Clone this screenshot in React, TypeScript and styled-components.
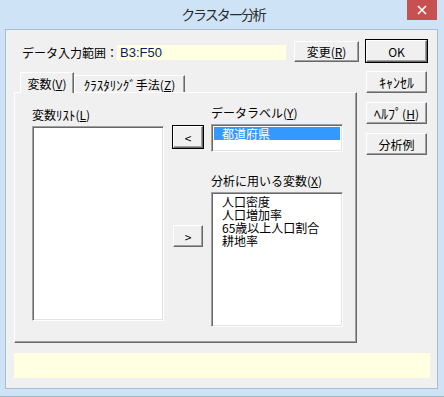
import styled, { createGlobalStyle } from 'styled-components';

const GlobalStyle = createGlobalStyle`
  html, body {
    margin: 0;
    padding: 0;
    width: 444px;
    height: 397px;
    overflow: hidden;
    background: #cfe3f6;
  }
  body {
    font-family: "Noto Sans CJK JP", "Liberation Sans", sans-serif;
    font-size: 12px;
    color: #000;
  }
`;

const labelItems = ['都道府県'];
const usedItems = ['人口密度', '人口増加率', '65歳以上人口割合', '耕地率'];

export default function App() {
  return (
    <>
      <GlobalStyle />
      <WindowStyled>
        <TitleBarStyled>
          <TitleText>クラスター分析</TitleText>
          <CloseButton>
            <svg width="10" height="10" viewBox="0 0 10 10">
              <path d="M1 1 L9 9 M9 1 L1 9" stroke="#fff" strokeWidth="1.6" />
            </svg>
          </CloseButton>
        </TitleBarStyled>
        <ClientStyled>
          <BodyRow>
            <MainColumn>
              <TopRow>
                <FieldLabel>データ入力範囲：</FieldLabel>
                <RangeField>B3:F50</RangeField>
                <PushButton $w={65} $h={21} $mt={2}>
                  変更(<u>R</u>)
                </PushButton>
              </TopRow>
              <TabStrip>
                <Tab $active $w={54}>
                  変数(<u>V</u>)
                </Tab>
                <Tab $w={111}>
                  <Kana $size={13}>ｸﾗｽﾀﾘﾝｸﾞ</Kana>手法(<u>Z</u>)
                </Tab>
              </TabStrip>
              <TabPanel>
                <ListColumn>
                  <ListLabel $mt={2}>
                    変数<Kana $size={13}>ﾘｽﾄ</Kana>(<u>L</u>)
                  </ListLabel>
                  <ListBox $h={195} />
                </ListColumn>
                <ArrowColumn>
                  <PushButton $w={30} $h={22} $mt={21} $focused>
                    &lt;
                  </PushButton>
                  <PushButton $w={30} $h={22} $mt={77}>
                    &gt;
                  </PushButton>
                </ArrowColumn>
                <ListColumn>
                  <ListLabel>
                    データラベル(<u>Y</u>)
                  </ListLabel>
                  <ListBox $h={28}>
                    {labelItems.map((t) => (
                      <ListItem key={t} $selected>
                        {t}
                      </ListItem>
                    ))}
                  </ListBox>
                  <ListLabel $mt={21}>
                    分析に用いる変数(<u>X</u>)
                  </ListLabel>
                  <ListBox $h={135}>
                    {usedItems.map((t) => (
                      <ListItem key={t}>{t}</ListItem>
                    ))}
                  </ListBox>
                </ListColumn>
              </TabPanel>
            </MainColumn>
            <SideColumn>
              <PushButton $w={61} $h={22} $mt={1} $focused>
                OK
              </PushButton>
              <PushButton $w={61} $h={22}>
                <Kana $size={14}>ｷｬﾝｾﾙ</Kana>
              </PushButton>
              <PushButton $w={61} $h={22}>
                <Kana $size={14}>ﾍﾙﾌﾟ</Kana>(<u>H</u>)
              </PushButton>
              <PushButton $w={61} $h={22}>
                分析例
              </PushButton>
            </SideColumn>
          </BodyRow>
          <StatusBar />
        </ClientStyled>
      </WindowStyled>
    </>
  );
}

const WindowStyled = styled.div`
  width: 444px;
  height: 397px;
  display: flex;
  flex-direction: column;
  background: #cfe3f6;
  box-sizing: border-box;
  border-bottom: 1px solid #a4b6c8;
`;

const TitleBarStyled = styled.div`
  height: 29px;
  flex-shrink: 0;
  display: flex;
  align-items: center;
  justify-content: center;
  position: relative;
`;

const TitleText = styled.div`
  font-size: 14px;
  letter-spacing: -2px;
  color: #2b2b2b;
  margin-top: -1px;
  margin-left: 2px;
`;

const CloseButton = styled.div`
  position: absolute;
  top: 0;
  right: 7px;
  width: 30px;
  height: 20px;
  background: #c75050;
  display: flex;
  align-items: center;
  justify-content: center;
`;

const ClientStyled = styled.div`
  margin: 0 6px 7px 5px;
  flex: 1;
  background: #f0f0f0;
  border: 1px solid #a9bdd2;
  padding: 9px 0 0 8px;
  display: flex;
  flex-direction: column;
`;

const BodyRow = styled.div`
  display: flex;
`;

const MainColumn = styled.div`
  width: 345px;
  display: flex;
  flex-direction: column;
`;

const SideColumn = styled.div`
  margin-left: 7px;
  display: flex;
  flex-direction: column;
  gap: 9px;
`;

const TopRow = styled.div`
  height: 33px;
  display: flex;
  align-items: flex-start;
`;

const FieldLabel = styled.div`
  width: 95px;
  padding-left: 8px;
  line-height: 15px;
  margin-top: 6px;
  font-size: 12px;
  white-space: nowrap;
`;

const RangeField = styled.div`
  width: 166px;
  height: 15px;
  margin-top: 6px;
  padding-left: 3px;
  background: #ffffe1;
  color: #0c1a66;
  font-family: "Liberation Sans", sans-serif;
  font-size: 13px;
  line-height: 15px;
  margin-right: 8px;
`;

const Kana = styled.span<{ $size: number }>`
  font-size: ${(p) => p.$size}px;
`;

const PushButton = styled.div<{ $w: number; $h: number; $mt?: number; $focused?: boolean }>`
  box-sizing: border-box;
  width: ${(p) => p.$w}px;
  height: ${(p) => p.$h}px;
  margin-top: ${(p) => p.$mt ?? 0}px;
  background: #f0f0f0;
  border-top: 1px solid #fff;
  border-left: 1px solid #fff;
  border-right: 1px solid #696969;
  border-bottom: 1px solid #696969;
  box-shadow: inset -1px -1px 0 #a0a0a0;
  outline: ${(p) => (p.$focused ? '1px solid #000' : 'none')};
  display: flex;
  align-items: center;
  justify-content: center;
  font-size: 12px;
  color: #000;
  white-space: nowrap;
`;

const TabStrip = styled.div`
  display: flex;
  align-items: flex-end;
  height: 20px;
  margin-left: 6px;
`;

const Tab = styled.div<{ $active?: boolean; $w: number }>`
  box-sizing: border-box;
  width: ${(p) => p.$w}px;
  height: ${(p) => (p.$active ? 21 : 17)}px;
  margin-bottom: ${(p) => (p.$active ? -1 : 0)}px;
  background: #f0f0f0;
  border-top: 1px solid #fff;
  border-left: 1px solid #fff;
  border-right: 1px solid #696969;
  box-shadow: inset -1px 0 0 #a0a0a0;
  display: flex;
  align-items: center;
  justify-content: center;
  font-size: 12px;
  white-space: nowrap;
  position: relative;
  z-index: ${(p) => (p.$active ? 1 : 0)};
`;

const TabPanel = styled.div`
  box-sizing: border-box;
  width: 343px;
  height: 251px;
  background: #f0f0f0;
  border-top: 1px solid #fff;
  border-left: 1px solid #fff;
  border-right: 1px solid #696969;
  border-bottom: 1px solid #696969;
  box-shadow: inset -1px -1px 0 #a0a0a0;
  padding: 12px 0 0 17px;
  display: flex;
  gap: 8px;
`;

const ListColumn = styled.div`
  width: 132px;
  display: flex;
  flex-direction: column;
`;

const ArrowColumn = styled.div`
  width: 30px;
  margin-left: 1px;
  display: flex;
  flex-direction: column;
`;

const ListLabel = styled.div<{ $mt?: number }>`
  height: 16px;
  line-height: 16px;
  margin-top: ${(p) => p.$mt ?? 0}px;
  margin-bottom: 3px;
  font-size: 12px;
  white-space: nowrap;
`;

const ListBox = styled.div<{ $h: number }>`
  box-sizing: border-box;
  height: ${(p) => p.$h}px;
  background: #fff;
  border-top: 1px solid #a0a0a0;
  border-left: 1px solid #a0a0a0;
  border-right: 1px solid #fff;
  border-bottom: 1px solid #fff;
  box-shadow: inset 1px 1px 0 #696969, inset -1px -1px 0 #e3e3e3;
  padding: 2px 2px 0 2px;
`;

const ListItem = styled.div<{ $selected?: boolean }>`
  height: 13px;
  line-height: 13px;
  padding-left: 8px;
  font-size: 12px;
  white-space: nowrap;
  background: ${(p) => (p.$selected ? '#3399ff' : 'transparent')};
  color: ${(p) => (p.$selected ? '#fff' : '#000')};
`;

const StatusBar = styled.div`
  width: 416px;
  height: 25px;
  margin-top: 10px;
  background: #ffffe1;
`;
